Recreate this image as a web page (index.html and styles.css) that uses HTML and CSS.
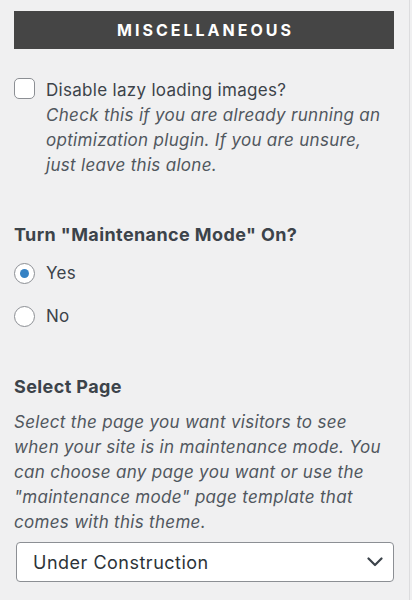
FILE: index.html
```html
<!DOCTYPE html>
<html>
<head>
<meta charset="utf-8">
<link rel="stylesheet" href="styles.css">
</head>
<body>
<div class="panel">
  <div class="section-title">MISCELLANEOUS</div>

  <label class="check-row">
    <span class="checkbox"></span>
    <span class="check-text">
      <span class="check-label">Disable lazy loading images?</span>
      <span class="desc">Check this if you are already running an optimization plugin. If you are unsure, just leave this alone.</span>
    </span>
  </label>

  <div class="field">
    <div class="field-title">Turn "Maintenance Mode" On?</div>
    <div class="radios">
      <label class="radio-row"><span class="radio checked"></span><span>Yes</span></label>
      <label class="radio-row"><span class="radio"></span><span>No</span></label>
    </div>
  </div>

  <div class="field select-field">
    <div class="field-title">Select Page</div>
    <div class="desc">Select the page you want visitors to see when your site is in maintenance mode. You can choose any page you want or use the "maintenance mode" page template that comes with this theme.</div>
    <div class="select">
      <span>Under Construction</span>
      <svg class="chev" width="16" height="10" viewBox="0 0 16 10"><path d="M1.5 1.5 L8 8 L14.5 1.5" fill="none" stroke="#3c434a" stroke-width="2.2" stroke-linecap="round" stroke-linejoin="round"/></svg>
    </div>
  </div>
</div>
</body>
</html>
```
FILE: styles.css
```css
html, body {
  margin: 0;
  padding: 0;
  background: #f0f0f1;
}
body {
  font-family: Inter, "Liberation Sans", sans-serif;
  color: #3c434a;
  font-size: 17px;
  letter-spacing: 0.3px;
}
.panel {
  width: 380px;
  height: 589px;
  padding: 11px 15px 0 14px;
  border-right: 1px solid #dcdcde;
  box-sizing: content-box;
}
.section-title {
  height: 38px;
  background: #454545;
  color: #fff;
  font-weight: 700;
  font-size: 16px;
  letter-spacing: 3px;
  display: flex;
  align-items: center;
  justify-content: center;
  padding-left: 3px;
}
.check-row {
  display: flex;
  gap: 11px;
  margin-top: 28px;
}
.checkbox {
  flex: none;
  width: 19px;
  height: 19px;
  margin-top: 1px;
  border: 1.5px solid #8c8f94;
  border-radius: 5px;
  background: #fff;
}
.check-text {
  display: flex;
  flex-direction: column;
}
.check-label {
  line-height: 26px;
}
.desc {
  font-style: italic;
  color: #50575e;
  line-height: 25px;
}
.field {
  margin-top: 44px;
}
.field-title {
  font-weight: 700;
  font-size: 18px;
  letter-spacing: 0.4px;
  line-height: 26px;
}
.radios {
  display: flex;
  flex-direction: column;
  gap: 21px;
  margin-top: 14px;
}
.radio-row {
  display: flex;
  align-items: center;
  gap: 11px;
  height: 22px;
}
.radio {
  flex: none;
  width: 19px;
  height: 19px;
  border: 1.5px solid #8c8f94;
  border-radius: 50%;
  background: #fff;
  display: flex;
  align-items: center;
  justify-content: center;
}
.radio.checked::after {
  content: "";
  width: 9px;
  height: 9px;
  border-radius: 50%;
  background: #3582c4;
}
.select-field {
  margin-top: 47px;
}
.select-field .desc {
  margin-top: 10px;
}
.select {
  margin-top: 7px;
  margin-left: 2px;
  height: 38px;
  border: 1px solid #8c8f94;
  border-radius: 4px;
  background: #fff;
  display: flex;
  align-items: center;
  justify-content: space-between;
  padding: 0 10px 0 16px;
  font-size: 18px;
  letter-spacing: 0.5px;
  color: #2c3338;
}
.chev {
  display: block;
}
```
